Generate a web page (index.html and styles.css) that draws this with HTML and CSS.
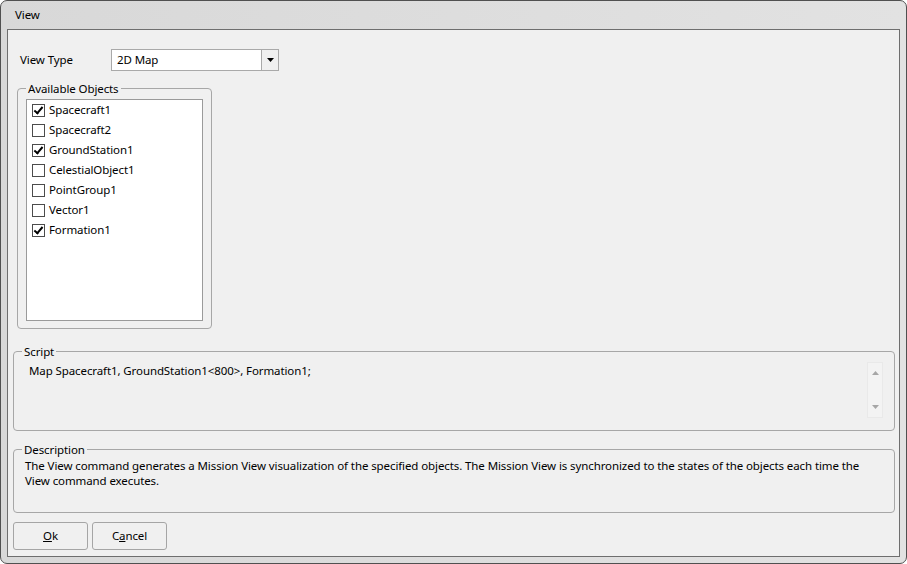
FILE: index.html
```html
<!DOCTYPE html>
<html lang="en">
<head>
    <meta charset="UTF-8">
    <title>View</title>
    <link rel="stylesheet" href="styles.css">
</head>
<body>
    <div class="window">
        <div class="title">View</div>
        <div class="client">
            <div class="view-type">
                <span class="view-label">View Type</span>
                <div class="combo">
                    <span class="combo-value">2D Map</span>
                    <span class="combo-btn">
                        <svg width="7" height="4" viewBox="0 0 7 4"><path d="M0 0h7L3.5 4z" fill="#000"/></svg>
                    </span>
                </div>
            </div>

            <fieldset class="group objects">
                <legend>Available Objects</legend>
                <div class="list">
                    <label class="item"><span class="check on"></span>Spacecraft1</label>
                    <label class="item"><span class="check"></span>Spacecraft2</label>
                    <label class="item"><span class="check on"></span>GroundStation1</label>
                    <label class="item"><span class="check"></span>CelestialObject1</label>
                    <label class="item"><span class="check"></span>PointGroup1</label>
                    <label class="item"><span class="check"></span>Vector1</label>
                    <label class="item"><span class="check on"></span>Formation1</label>
                </div>
            </fieldset>

            <fieldset class="group script">
                <legend>Script</legend>
                <div class="script-box">
                    <div class="script-text">Map Spacecraft1, GroundStation1&lt;800&gt;, Formation1;</div>
                    <div class="vscroll">
                        <svg width="7" height="4" viewBox="0 0 7 4"><path d="M3.5 0L7 4H0z" fill="#a6a6a6"/></svg>
                        <svg width="7" height="4" viewBox="0 0 7 4"><path d="M0 0h7L3.5 4z" fill="#a6a6a6"/></svg>
                    </div>
                </div>
            </fieldset>

            <fieldset class="group description">
                <legend>Description</legend>
                <div class="desc-text">The View command generates a Mission View visualization of the specified objects. The Mission View is synchronized to the states of the objects each time the View command executes.</div>
            </fieldset>

            <div class="buttons">
                <button class="btn"><u>O</u>k</button>
                <button class="btn">C<u>a</u>ncel</button>
            </div>
        </div>
    </div>
</body>
</html>
```

FILE: styles.css
```css
body {
    margin: 0;
    font-family: "Noto Sans", "Open Sans", sans-serif;
    font-size: 11.5px;
    letter-spacing: -0.1px;
    color: #000;
    background: #fff;
}
.window {
    width: 907px;
    height: 564px;
    box-sizing: border-box;
    border: 1px solid #505050;
    border-radius: 7px;
    background: linear-gradient(to right, #d8d8d8, #e2e2e2);
    display: flex;
    flex-direction: column;
}
.title {
    height: 28px;
    line-height: 27px;
    padding-left: 14px;
}
.client {
    flex: 1;
    margin: 0 6px 6px;
    border: 1px solid #6e6e6e;
    background: #f0f0f0;
    padding: 19px 4px 0 5px;
}
.view-type {
    display: flex;
    align-items: center;
    margin-left: 7px;
}
.view-label {
    width: 91px;
    padding-bottom: 2px;
}
.combo {
    width: 168px;
    height: 22px;
    box-sizing: border-box;
    border: 1px solid #a9a9a9;
    background: #fff;
    display: flex;
}
.combo-value {
    flex: 1;
    line-height: 19px;
    padding-left: 5px;
}
.combo-btn {
    width: 16px;
    border-left: 1px solid #a9a9a9;
    background: #f0f0f0;
    display: flex;
    align-items: center;
    justify-content: center;
}
.group {
    margin: 0;
    border: 1px solid #a7a7a7;
    border-radius: 4px;
    padding: 3px 8px 7px;
    min-width: 0;
}
.group legend {
    padding: 0 2px;
    line-height: 15px;
}
.objects {
    width: 195px;
    box-sizing: border-box;
    margin: 10px 0 0 4px;
}
.list {
    height: 222px;
    box-sizing: border-box;
    border: 1px solid #9a9a9a;
    background: #fff;
}
.item {
    display: flex;
    align-items: center;
    height: 20px;
    padding-left: 5px;
    line-height: 18px;
}
.check {
    width: 13px;
    height: 13px;
    box-sizing: border-box;
    border: 1px solid #4c4c4c;
    background: #fff;
    margin-right: 4px;
    position: relative;
}
.check.on::after {
    content: "";
    position: absolute;
    left: 3px;
    top: 0px;
    width: 3px;
    height: 7px;
    border: solid #000;
    border-width: 0 2px 2px 0;
    transform: rotate(40deg);
}
.script {
    margin-top: 15px;
    padding-bottom: 12px;
}
.script-box {
    display: flex;
    height: 56px;
}
.script-text {
    flex: 1;
    padding: 1px 0 0 7px;
    line-height: 15px;
}
.vscroll {
    width: 16px;
    box-sizing: border-box;
    border: 1px solid #e9e9e9;
    background: #f3f3f3;
    margin-right: 3px;
    display: flex;
    flex-direction: column;
    align-items: center;
    justify-content: space-between;
    padding: 8px 0 8px;
}
.description {
    margin-top: 11px;
    padding-top: 1px;
    padding-bottom: 24px;
}
.desc-text {
    line-height: 15px;
    padding-left: 3px;
}
.buttons {
    display: flex;
    gap: 4px;
    margin-top: 9px;
}
.btn {
    width: 75px;
    height: 28px;
    border: 1px solid #a5a5a5;
    border-radius: 3px;
    background: #f0f0f0;
    font-family: inherit;
    font-size: 11.5px;
    letter-spacing: -0.1px;
    color: #000;
    padding: 0 0 2px;
}
```
